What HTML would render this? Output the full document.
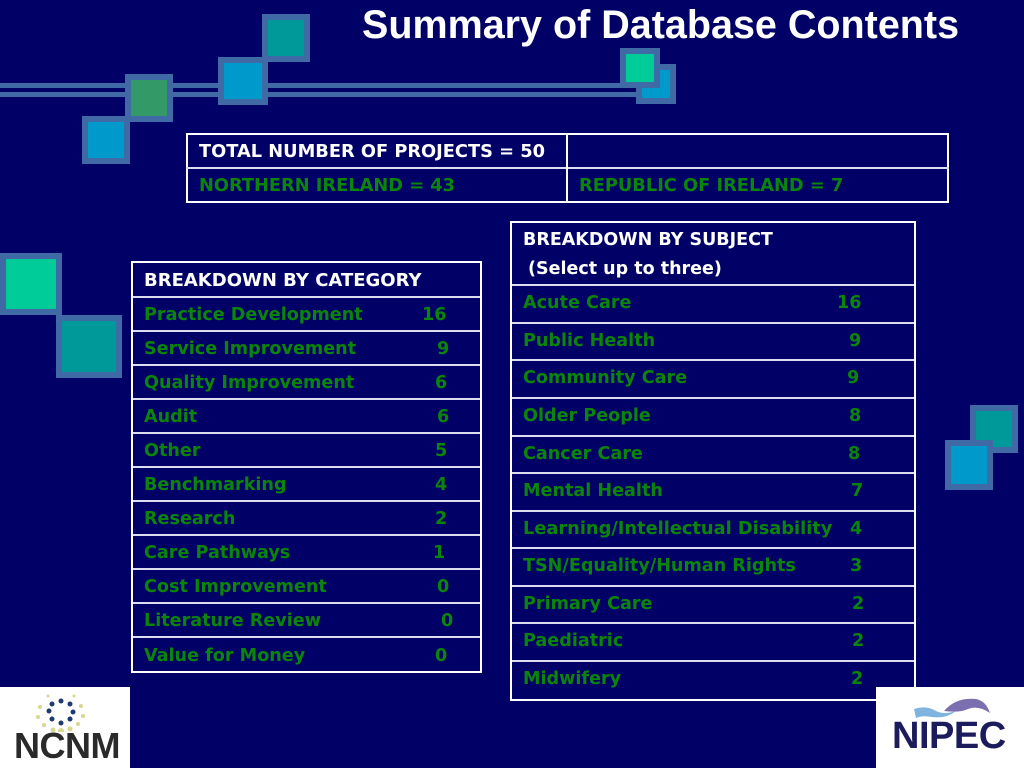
<!DOCTYPE html>
<html><head><meta charset="utf-8"><style>
*{margin:0;padding:0;box-sizing:border-box}
body{width:1024px;height:768px;background:#000066;position:relative;overflow:hidden;font-family:"DejaVu Sans","Liberation Sans",sans-serif;font-weight:bold}
.a{position:absolute}
.sq{position:absolute;border:6px solid #3f6aa6}
.t{position:absolute;border:2px solid #fff}
.hl{position:absolute;height:2px;background:#dcdcf0}
.g{position:absolute;color:#0a850a;font-size:17.6px;white-space:nowrap;line-height:20px}
.w{position:absolute;color:#fff;font-size:17.5px;white-space:nowrap;line-height:20px}
</style></head><body>
<div class="a" style="left:362px;top:3px;font-family:'Liberation Sans',sans-serif;font-size:39.5px;color:#fff;white-space:nowrap">Summary of Database Contents</div>
<div class="a" style="left:0;top:83px;width:650px;height:5px;background:#3f6aa6"></div>
<div class="a" style="left:0;top:92px;width:650px;height:5px;background:#3f6aa6"></div>
<div class="sq" style="left:262px;top:14px;width:48px;height:48px;background:#009999"></div>
<div class="sq" style="left:218px;top:57px;width:50px;height:48px;background:#0099cc"></div>
<div class="sq" style="left:82px;top:116px;width:48px;height:48px;background:#0099cc"></div>
<div class="sq" style="left:125px;top:74px;width:48px;height:48px;background:#339966"></div>
<div class="sq" style="left:636px;top:64px;width:40px;height:40px;background:#0099cc"></div>
<div class="sq" style="left:620px;top:48px;width:40px;height:40px;background:#00cc99"></div>
<div class="sq" style="left:0;top:253px;width:62px;height:62px;background:#00cc99"></div>
<div class="sq" style="left:56px;top:315px;width:66px;height:63px;background:#009999"></div>
<div class="sq" style="left:970px;top:405px;width:48px;height:48px;background:#009999"></div>
<div class="sq" style="left:945px;top:440px;width:48px;height:50px;background:#0099cc"></div>
<div class="a" style="left:951px;top:446px;width:19px;height:7px;background:#0099cc"></div>

<div class="t" style="left:186px;top:133px;width:763px;height:70px"></div>
<div class="hl" style="left:186px;top:167px;width:763px"></div>
<div class="a" style="left:566px;top:133px;width:2px;height:70px;background:#fff"></div>
<div class="w" style="left:199px;top:142px;font-size:17.8px">TOTAL NUMBER OF PROJECTS = 50</div>
<div class="g" style="left:199px;top:176px;font-size:17.8px">NORTHERN IRELAND = 43</div>
<div class="g" style="left:579px;top:176px;font-size:17.8px">REPUBLIC OF IRELAND = 7</div>

<div class="t" style="left:131px;top:261px;width:351px;height:412px"></div>
<div class="w" style="left:144px;top:271px;font-size:18px">BREAKDOWN BY CATEGORY</div>
<div class="hl" style="left:133px;top:296px;width:347px"></div>
<div class="hl" style="left:133px;top:330px;width:347px"></div>
<div class="hl" style="left:133px;top:364px;width:347px"></div>
<div class="hl" style="left:133px;top:398px;width:347px"></div>
<div class="hl" style="left:133px;top:432px;width:347px"></div>
<div class="hl" style="left:133px;top:466px;width:347px"></div>
<div class="hl" style="left:133px;top:500px;width:347px"></div>
<div class="hl" style="left:133px;top:534px;width:347px"></div>
<div class="hl" style="left:133px;top:568px;width:347px"></div>
<div class="hl" style="left:133px;top:602px;width:347px"></div>
<div class="hl" style="left:133px;top:636px;width:347px"></div>
<div class="g" style="left:144px;top:305px">Practice Development</div><div class="g" style="left:422px;top:305px">16</div>
<div class="g" style="left:144px;top:339px">Service Improvement</div><div class="g" style="left:437px;top:339px">9</div>
<div class="g" style="left:144px;top:373px">Quality Improvement</div><div class="g" style="left:435px;top:373px">6</div>
<div class="g" style="left:144px;top:407px">Audit</div><div class="g" style="left:437px;top:407px">6</div>
<div class="g" style="left:144px;top:441px">Other</div><div class="g" style="left:435px;top:441px">5</div>
<div class="g" style="left:144px;top:475px">Benchmarking</div><div class="g" style="left:435px;top:475px">4</div>
<div class="g" style="left:144px;top:509px">Research</div><div class="g" style="left:435px;top:509px">2</div>
<div class="g" style="left:144px;top:543px">Care Pathways</div><div class="g" style="left:433px;top:543px">1</div>
<div class="g" style="left:144px;top:577px">Cost Improvement</div><div class="g" style="left:437px;top:577px">0</div>
<div class="g" style="left:144px;top:611px">Literature Review</div><div class="g" style="left:441px;top:611px">0</div>
<div class="g" style="left:144px;top:646px">Value for Money</div><div class="g" style="left:435px;top:646px">0</div>

<div class="t" style="left:510px;top:221px;width:406px;height:480px"></div>
<div class="w" style="left:523px;top:230px">BREAKDOWN BY SUBJECT</div>
<div class="w" style="left:528px;top:259px">(Select up to three)</div>
<div class="hl" style="left:512px;top:284px;width:402px"></div>
<div class="hl" style="left:512px;top:322px;width:402px"></div>
<div class="hl" style="left:512px;top:359px;width:402px"></div>
<div class="hl" style="left:512px;top:397px;width:402px"></div>
<div class="hl" style="left:512px;top:435px;width:402px"></div>
<div class="hl" style="left:512px;top:472px;width:402px"></div>
<div class="hl" style="left:512px;top:510px;width:402px"></div>
<div class="hl" style="left:512px;top:547px;width:402px"></div>
<div class="hl" style="left:512px;top:585px;width:402px"></div>
<div class="hl" style="left:512px;top:622px;width:402px"></div>
<div class="hl" style="left:512px;top:660px;width:402px"></div>
<div class="g" style="left:523px;top:293px">Acute Care</div><div class="g" style="left:837px;top:293px">16</div>
<div class="g" style="left:523px;top:331px">Public Health</div><div class="g" style="left:849px;top:331px">9</div>
<div class="g" style="left:523px;top:368px">Community Care</div><div class="g" style="left:847px;top:368px">9</div>
<div class="g" style="left:523px;top:406px">Older People</div><div class="g" style="left:849px;top:406px">8</div>
<div class="g" style="left:523px;top:444px">Cancer Care</div><div class="g" style="left:848px;top:444px">8</div>
<div class="g" style="left:523px;top:481px">Mental Health</div><div class="g" style="left:851px;top:481px">7</div>
<div class="g" style="left:523px;top:519px;font-size:17.8px">Learning/Intellectual Disability</div><div class="g" style="left:850px;top:519px">4</div>
<div class="g" style="left:523px;top:556px">TSN/Equality/Human Rights</div><div class="g" style="left:850px;top:556px">3</div>
<div class="g" style="left:523px;top:594px">Primary Care</div><div class="g" style="left:852px;top:594px">2</div>
<div class="g" style="left:523px;top:631px">Paediatric</div><div class="g" style="left:852px;top:631px">2</div>
<div class="g" style="left:523px;top:669px">Midwifery</div><div class="g" style="left:851px;top:669px">2</div>

<div class="a" style="left:0;top:687px;width:130px;height:81px;background:#fff;overflow:hidden">
<svg width="130" height="45" style="position:absolute;left:0;top:0">
<g fill="#1e3a6e"><circle cx="61" cy="14" r="2.5"/><circle cx="70" cy="17" r="2.5"/><circle cx="73" cy="25" r="2.5"/><circle cx="70" cy="32" r="2.5"/><circle cx="61" cy="36" r="2.5"/><circle cx="52" cy="32" r="2.5"/><circle cx="49" cy="24" r="2.5"/><circle cx="52" cy="17" r="2.5"/></g>
<g fill="#d8d890"><circle cx="40" cy="20" r="2"/><circle cx="38" cy="30" r="2"/><circle cx="44" cy="38" r="2"/><circle cx="53" cy="43" r="2.5"/><circle cx="61" cy="44" r="3"/><circle cx="70" cy="42" r="2.5"/><circle cx="78" cy="37" r="2"/><circle cx="83" cy="29" r="2"/><circle cx="81" cy="19" r="2"/><circle cx="74" cy="9" r="1.5"/><circle cx="48" cy="9" r="1.5"/></g>
</svg>
<div class="a" style="left:14px;top:38px;font-family:'Liberation Sans',sans-serif;font-size:36px;color:#2a2a2a;letter-spacing:-0.5px">NCNM</div>
</div>

<div class="a" style="left:876px;top:687px;width:148px;height:81px;background:#fff;overflow:hidden">
<svg width="148" height="40" style="position:absolute;left:0;top:0">
<path d="M38 22 Q50 18 60 24 Q68 28 80 24 Q70 32 56 30 Q46 28 40 31 Z" fill="#7fb4e0"/>
<path d="M68 24 Q80 10 100 12 Q110 14 114 26 Q102 18 92 22 Q84 26 68 24 Z" fill="#7c6fb0"/>
</svg>
<div class="a" style="left:16px;top:28px;font-family:'Liberation Sans',sans-serif;font-size:38px;color:#1c1c5c;letter-spacing:-0.5px">NIPEC</div>
</div>
</body></html>
